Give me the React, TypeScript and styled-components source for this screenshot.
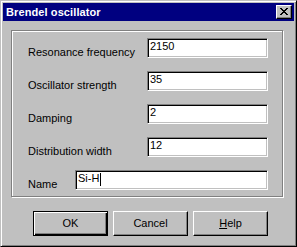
import React from "react";
import styled, { createGlobalStyle } from "styled-components";

const face = "#c0c0c0";
const shadow = "#808080";
const highlight = "#ffffff";
const dark = "#000000";
const fontFamily = `"Liberation Sans", Arial, sans-serif`;

const GlobalStyle = createGlobalStyle`
  html, body {
    margin: 0;
    padding: 0;
    background: ${face};
  }
  body {
    font-family: ${fontFamily};
    font-size: 11px;
  }
`;

type Field = {
  label: string;
  value: string;
  labelWidth: number;
  fieldWidth: number;
  caret?: boolean;
};

const fields: Field[] = [
  { label: "Resonance frequency", value: "2150", labelWidth: 119, fieldWidth: 121 },
  { label: "Oscillator strength", value: "35", labelWidth: 119, fieldWidth: 121 },
  { label: "Damping", value: "2", labelWidth: 119, fieldWidth: 121 },
  { label: "Distribution width", value: "12", labelWidth: 119, fieldWidth: 121 },
  { label: "Name", value: "Si-H", labelWidth: 47, fieldWidth: 193, caret: true },
];

const CloseGlyph = () => (
  <svg width="8" height="7" viewBox="0 0 8 7" shapeRendering="crispEdges">
    <path
      fill="#000"
      d="M0 0h2v1H0z M6 0h2v1H6z M1 1h2v1H1z M5 1h2v1H5z M2 2h4v1H2z M3 3h2v1H3z M2 4h4v1H2z M1 5h2v1H1z M5 5h2v1H5z M0 6h2v1H0z M6 6h2v1H6z"
    />
  </svg>
);

const App: React.FC = () => {
  return (
    <>
      <GlobalStyle />
      <Window>
        <TitleBar>
          <Title>Brendel oscillator</Title>
          <CloseButton aria-label="Close">
            <CloseGlyph />
          </CloseButton>
        </TitleBar>

        <Body>
          <GroupBox>
            {fields.map((f) => (
              <Row key={f.label}>
                <Label $width={f.labelWidth}>{f.label}</Label>
                <TextField $width={f.fieldWidth}>
                  {f.value}
                  {f.caret && <Caret />}
                </TextField>
              </Row>
            ))}
          </GroupBox>

          <ButtonRow>
            <PushButton $isDefault>OK</PushButton>
            <PushButton>Cancel</PushButton>
            <PushButton>
              <u>H</u>elp
            </PushButton>
          </ButtonRow>
        </Body>
      </Window>
    </>
  );
};

export default App;

const Window = styled.div`
  box-sizing: border-box;
  width: 297px;
  height: 247px;
  background: ${face};
  border: 1px solid;
  border-color: ${face} ${dark} ${dark} ${face};
  box-shadow: inset 1px 1px ${highlight}, inset -1px -1px ${shadow};
  padding: 2px;
  display: flex;
  flex-direction: column;
`;

const TitleBar = styled.div`
  height: 18px;
  background: #000080;
  display: flex;
  align-items: center;
  justify-content: space-between;
  padding: 0 2px 0 3px;
`;

const Title = styled.span`
  color: #fff;
  font-weight: bold;
  font-size: 11px;
  line-height: 18px;
  letter-spacing: 0.1px;
`;

const CloseButton = styled.div`
  box-sizing: border-box;
  width: 16px;
  height: 14px;
  background: ${face};
  border: 1px solid;
  border-color: ${highlight} ${dark} ${dark} ${highlight};
  box-shadow: inset -1px -1px ${shadow};
  display: flex;
  align-items: center;
  justify-content: center;
  padding: 0 1px 1px 0;
`;

const Body = styled.div`
  padding: 9px 0 0 8px;
  display: flex;
  flex-direction: column;
`;

const GroupBox = styled.div`
  box-sizing: border-box;
  width: 272px;
  height: 167px;
  border: 1px solid ${shadow};
  box-shadow: inset 1px 1px ${highlight}, 1px 1px ${highlight};
  padding: 7px 0 0 16px;
  display: flex;
  flex-direction: column;
  gap: 12px;
`;

const Row = styled.div`
  display: flex;
  align-items: flex-start;
`;

const Label = styled.span<{ $width: number }>`
  width: ${(p) => p.$width}px;
  padding-top: 8px;
  line-height: 13px;
  color: #000;
  white-space: nowrap;
`;

const TextField = styled.div<{ $width: number }>`
  box-sizing: border-box;
  width: ${(p) => p.$width}px;
  height: 20px;
  background: #fff;
  border: 1px solid;
  border-color: ${shadow} ${highlight} ${highlight} ${shadow};
  box-shadow: inset 1px 1px ${dark}, inset -1px -1px ${face};
  padding: 0 0 0 2px;
  line-height: 15px;
  color: #000;
  display: flex;
  align-items: flex-start;
  white-space: nowrap;
`;

const Caret = styled.span`
  display: inline-block;
  width: 1px;
  height: 13px;
  margin: 2px 0 0 1px;
  background: #000;
`;

const ButtonRow = styled.div`
  display: flex;
  gap: 5px;
  margin-top: 14px;
  padding-left: 22px;
`;

const PushButton = styled.div<{ $isDefault?: boolean }>`
  box-sizing: border-box;
  width: 75px;
  height: 25px;
  background: ${face};
  border: 1px solid;
  border-color: ${(p) =>
    p.$isDefault ? dark : `${highlight} ${dark} ${dark} ${highlight}`};
  box-shadow: ${(p) =>
    p.$isDefault
      ? `inset 1px 1px ${highlight}, inset -1px -1px ${dark}, inset -2px -2px ${shadow}`
      : `inset -1px -1px ${shadow}`};
  display: flex;
  align-items: center;
  justify-content: center;
  line-height: 21px;
  color: #000;

  u {
    text-decoration: underline;
    text-underline-offset: 1px;
  }
`;
